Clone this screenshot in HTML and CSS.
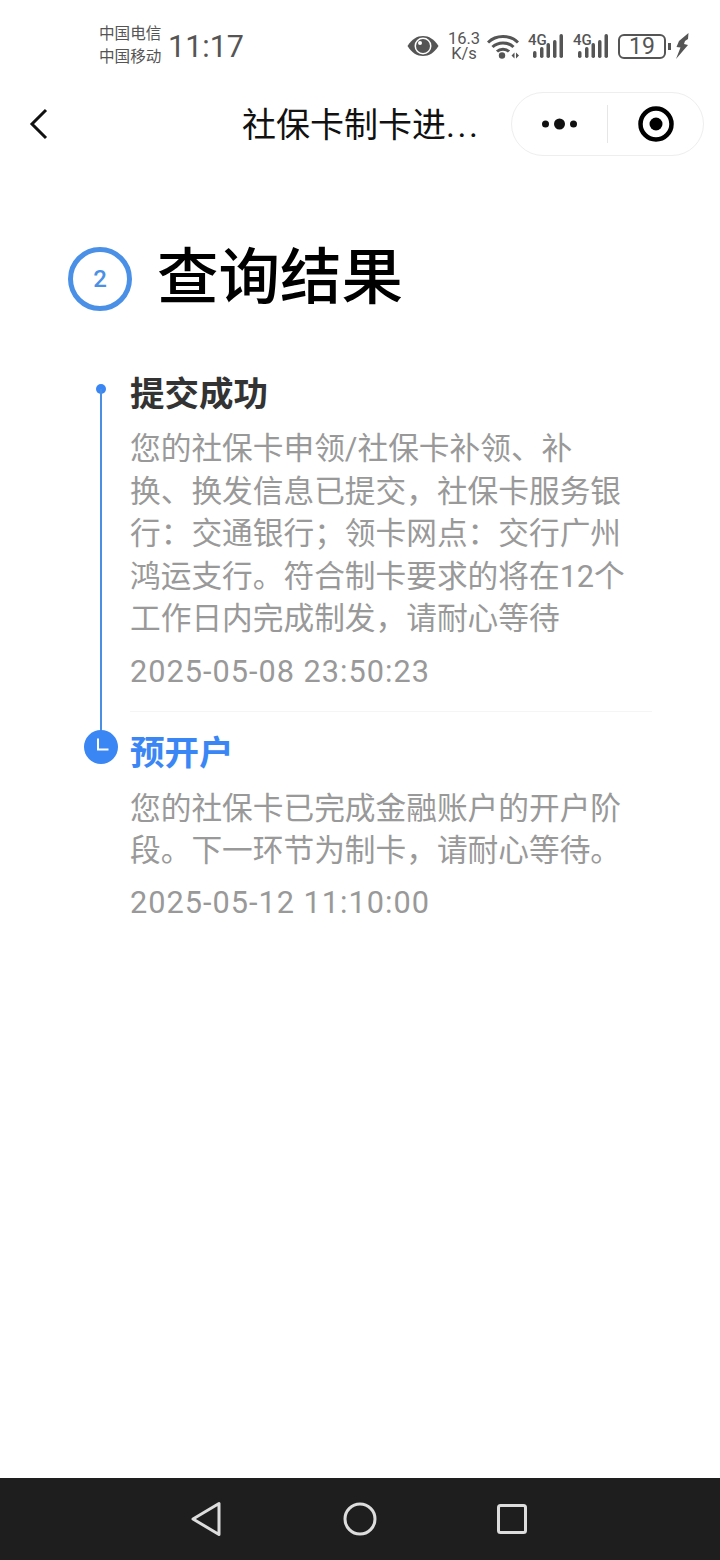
FILE: index.html
```html
<!DOCTYPE html>
<html lang="zh-CN">
<head>
    <meta charset="UTF-8">
    <meta name="viewport" content="width=device-width, initial-scale=1.0">
    <title>社保卡制卡进度查询</title>
    <link rel="stylesheet" href="styles.css">
</head>
<body>
    <div class="screen">
        <div class="status-bar">
            <div class="carriers">
                <span>中国电信</span>
                <span>中国移动</span>
            </div>
            <span class="clock">11:17</span>
            <div class="status-icons">
                <svg class="icon-eye" width="32" height="22" viewBox="0 0 32 22">
                    <path d="M0.500 11C5 4 10 1 16 1s11 3 15.500 10c-4.500 7-9.500 10-15.500 10S5 18 0.500 11z" fill="#555"/>
                    <circle cx="16" cy="11" r="8.500" fill="#fff"/>
                    <circle cx="16" cy="11" r="7" fill="#555"/>
                    <circle cx="13" cy="8" r="2" fill="#fff"/>
                </svg>
                <div class="net-speed">
                    <span>16.3</span>
                    <span>K/s</span>
                </div>
                <svg class="icon-wifi" width="32" height="26" viewBox="0 0 32 26">
                    <path d="M1 9.500C9 1.500 23 1.500 31 9.500M5.500 14C11 8.500 21 8.500 26.500 14M10 18.500C13 15.500 19 15.500 22 18.500" fill="none" stroke="#555" stroke-width="3"/>
                    <circle cx="15" cy="22.500" r="3.200" fill="#555"/>
                    <path d="M24.500 22.500l3-3v6zM32 22.500l-3-3v6z" fill="#555"/>
                </svg>
                <svg class="icon-signal" width="36" height="32" viewBox="0 -3 36 32">
                    <text x="0" y="12" class="signal-label">4G</text>
                    <rect x="5" y="18" width="3.500" height="7" rx="1.700" fill="#555"/>
                    <rect x="12" y="14" width="3.500" height="11" rx="1.700" fill="#555"/>
                    <rect x="18.500" y="10" width="3.500" height="15" rx="1.700" fill="#555"/>
                    <rect x="25" y="7" width="3.500" height="18" rx="1.700" fill="#555"/>
                    <rect x="31.500" y="1" width="3.500" height="24" rx="1.700" fill="#555"/>
                </svg>
                <svg class="icon-signal" width="36" height="32" viewBox="0 -3 36 32">
                    <text x="0" y="12" class="signal-label">4G</text>
                    <rect x="5" y="18" width="3.500" height="7" rx="1.700" fill="#555"/>
                    <rect x="12" y="14" width="3.500" height="11" rx="1.700" fill="#555"/>
                    <rect x="18.500" y="10" width="3.500" height="15" rx="1.700" fill="#555"/>
                    <rect x="25" y="7" width="3.500" height="18" rx="1.700" fill="#555"/>
                    <rect x="31.500" y="1" width="3.500" height="24" rx="1.700" fill="#555"/>
                </svg>
                <div class="battery">
                    <span class="battery-level">19</span>
                    <span class="battery-tip"></span>
                </div>
                <svg class="icon-bolt" width="14" height="26" viewBox="0 0 14 26">
                    <path d="M13.500 0L4 8 1.500 14l4 0.500L1 26l12-14-4-1 1-3 3-2z" fill="#555"/>
                </svg>
            </div>
        </div>

        <div class="nav-bar">
            <button class="back-button" type="button">
                <svg width="20" height="32" viewBox="0 0 20 32">
                    <path d="M17 2L3 16l14 14" fill="none" stroke="#111" stroke-width="3"/>
                </svg>
            </button>
            <div class="nav-title">社保卡制卡进<span class="title-dots">...</span></div>
            <div class="capsule">
                <div class="capsule-part">
                    <svg width="40" height="14" viewBox="0 0 40 14">
                        <circle cx="5.500" cy="7" r="3.500" fill="#111"/>
                        <circle cx="19.500" cy="7" r="5.500" fill="#111"/>
                        <circle cx="33.500" cy="7" r="3.500" fill="#111"/>
                    </svg>
                </div>
                <span class="capsule-divider"></span>
                <div class="capsule-part">
                    <svg width="36" height="36" viewBox="0 0 36 36">
                        <circle cx="18" cy="18" r="15.500" fill="none" stroke="#000" stroke-width="4.500"/>
                        <circle cx="18" cy="18" r="6.500" fill="#000"/>
                    </svg>
                </div>
            </div>
        </div>

        <main class="content">
            <div class="result-header">
                <span class="step-number">2</span>
                <h1>查询结果</h1>
            </div>

            <div class="timeline">
                <div class="timeline-item done">
                    <span class="dot"></span>
                    <h2>提交成功</h2>
                    <p>您的社保卡申领/社保卡补领、补换、换发信息已提交，社保卡服务银行：交通银行；领卡网点：交行广州鸿运支行。符合制卡要求的将在12个工作日内完成制发，请耐心等待</p>
                    <div class="time">2025-05-08 23:50:23</div>
                </div>
                <div class="timeline-item current">
                    <svg class="clock-mark" width="34" height="34" viewBox="0 0 34 34">
                        <circle cx="17" cy="17" r="17" fill="#3a86f5"/>
                        <path d="M14 8.500v11h10.500" fill="none" stroke="#fff" stroke-width="2"/>
                    </svg>
                    <h2>预开户</h2>
                    <p>您的社保卡已完成金融账户的开户阶段。下一环节为制卡，请耐心等待。</p>
                    <div class="time">2025-05-12 11:10:00</div>
                </div>
            </div>
        </main>

        <div class="system-nav">
            <svg width="32" height="36" viewBox="0 0 32 36">
                <path d="M28 2.500V33.500L2 18z" fill="none" stroke="#ddd" stroke-width="3" stroke-linejoin="round"/>
            </svg>
            <svg width="34" height="34" viewBox="0 0 34 34">
                <circle cx="17" cy="17" r="15" fill="none" stroke="#ddd" stroke-width="3"/>
            </svg>
            <svg width="32" height="32" viewBox="0 0 32 32">
                <rect x="1.500" y="2.500" width="27" height="27" rx="2" fill="none" stroke="#ddd" stroke-width="3"/>
            </svg>
        </div>
    </div>
</body>
</html>
```

FILE: styles.css
```css
* {
    box-sizing: border-box;
}
body {
    margin: 0;
    background: #fff;
    font-family: Roboto, "Noto Sans CJK SC", sans-serif;
}
.screen {
    width: 720px;
    height: 1560px;
    display: flex;
    flex-direction: column;
    overflow: hidden;
}

/* barra de estado */
.status-bar {
    height: 92px;
    display: flex;
    align-items: center;
    padding: 0 31px 0 99px;
    color: #555;
}
.carriers {
    display: flex;
    flex-direction: column;
    font-size: 15.600px;
    line-height: 23px;
    width: 69px;
}
.clock {
    font-size: 30.500px;
}
.status-icons {
    margin-left: auto;
    display: flex;
    align-items: center;
}
.net-speed {
    display: flex;
    flex-direction: column;
    align-items: center;
    font-size: 16.500px;
    line-height: 15.500px;
    margin-left: 9px;
    width: 32px;
}
.icon-wifi {
    margin-left: 7px;
}
.icon-signal {
    margin-left: 9px;
}
.signal-label {
    font-size: 15px;
    font-weight: 500;
    fill: #555;
}
.battery {
    display: flex;
    align-items: center;
    margin-left: 9px;
}
.battery-level {
    width: 48px;
    height: 25px;
    border: 2px solid #555;
    border-radius: 6px;
    font-size: 23px;
    line-height: 21px;
    text-align: center;
}
.battery-tip {
    width: 3px;
    height: 7px;
    margin-left: 2px;
    background: #555;
}
.icon-bolt {
    margin-left: 4px;
}

/* barra de navegacion */
.nav-bar {
    height: 64px;
    display: flex;
    align-items: center;
    padding: 0 16px 0 29px;
}
.back-button {
    width: 20px;
    height: 32px;
    padding: 0;
    border: none;
    background: none;
}
.nav-title {
    margin: 0 0 4px 193px;
    font-size: 34px;
    color: #111;
    white-space: nowrap;
}
.title-dots {
    letter-spacing: 2.500px;
}
.capsule {
    margin-left: auto;
    width: 193px;
    height: 64px;
    display: flex;
    align-items: center;
    border: 1px solid #eee;
    border-radius: 32px;
    background: #fff;
}
.capsule-part {
    flex: 1;
    display: flex;
    justify-content: center;
    align-items: center;
}
.capsule-divider {
    width: 1px;
    height: 38px;
    background: #e6e6e6;
}

/* contenido */
.content {
    flex: 1;
    padding: 91px 68px 0;
}
.result-header {
    display: flex;
    align-items: center;
    gap: 25px;
}
.step-number {
    width: 64px;
    height: 64px;
    border: 5px solid #4a90e6;
    border-radius: 50%;
    display: flex;
    justify-content: center;
    align-items: center;
    font-size: 24px;
    font-weight: 500;
    color: #4a90e6;
}
h1 {
    margin: 0 0 2px;
    font-size: 61.500px;
    font-weight: 500;
    line-height: 62px;
    color: #000;
}
.timeline {
    margin-top: 62px;
    padding-left: 62px;
}
.timeline-item {
    position: relative;
    width: 522px;
}
.timeline-item.done {
    padding-bottom: 18px;
    border-bottom: 1px solid #f5f5f5;
    margin-bottom: 20px;
}
.dot {
    position: absolute;
    left: -34px;
    top: 11px;
    width: 10px;
    height: 10px;
    border-radius: 50%;
    background: #3a86f5;
}
.dot::after {
    content: "";
    position: absolute;
    left: 4px;
    top: 5px;
    width: 2px;
    height: 344px;
    background: #4a90e2;
}
.clock-mark {
    position: absolute;
    left: -46px;
    top: -2px;
}
h2 {
    margin: 0;
    font-size: 34.500px;
    font-weight: 700;
    line-height: 42px;
    color: #333;
}
.current h2 {
    color: #3a86f5;
}
.timeline-item p {
    margin: 13px 22px 0 0;
    font-size: 30.700px;
    line-height: 42.500px;
    color: #999;
}
.current p {
    margin-top: 14px;
}
.time {
    margin-top: 10px;
    font-size: 30.700px;
    letter-spacing: 1px;
    line-height: 42px;
    color: #999;
}
.current .time {
    margin-top: 9px;
}

/* barra del sistema */
.system-nav {
    height: 82px;
    background: #1e1e1e;
    display: flex;
    justify-content: center;
    align-items: center;
    gap: 120px;
}
```
